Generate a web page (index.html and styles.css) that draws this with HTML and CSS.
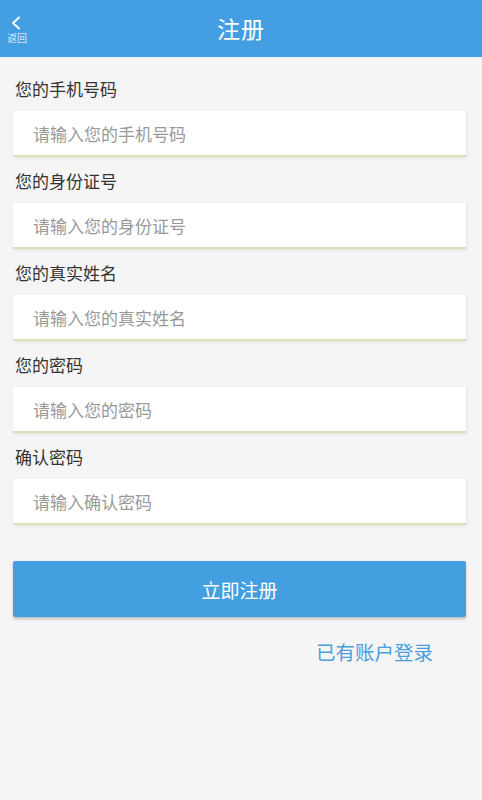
FILE: index.html
```html
<!DOCTYPE html>
<html lang="zh-CN">
<head>
<meta charset="utf-8">
<title>注册</title>
<link rel="stylesheet" href="styles.css">
</head>
<body>
<header class="topbar">
  <a class="back" href="#">
    <svg class="back-icon" width="12" height="14" viewBox="0 0 12 14"><path d="M9 1.5 L3 7 L9 12.5" fill="none" stroke="#fff" stroke-width="2" stroke-linecap="round" stroke-linejoin="round"/></svg>
    <span class="back-text">返回</span>
  </a>
  <h1 class="title">注册</h1>
</header>
<main class="form">
  <div class="field">
    <label class="label">您的手机号码</label>
    <input class="input" type="text" placeholder="请输入您的手机号码">
  </div>
  <div class="field">
    <label class="label">您的身份证号</label>
    <input class="input" type="text" placeholder="请输入您的身份证号">
  </div>
  <div class="field">
    <label class="label">您的真实姓名</label>
    <input class="input" type="text" placeholder="请输入您的真实姓名">
  </div>
  <div class="field">
    <label class="label">您的密码</label>
    <input class="input" type="password" placeholder="请输入您的密码">
  </div>
  <div class="field">
    <label class="label">确认密码</label>
    <input class="input" type="password" placeholder="请输入确认密码">
  </div>
  <button class="submit" type="button">立即注册</button>
  <div class="login-row"><a class="login" href="#">已有账户登录</a></div>
</main>
</body>
</html>
```
FILE: styles.css
```css
* { box-sizing: border-box; }
html, body { margin: 0; padding: 0; }
body {
  background: #f5f5f5;
  font-family: "Noto Sans CJK SC", "Noto Sans", sans-serif;
  color: #333;
  width: 482px;
  min-height: 800px;
}
.topbar {
  position: relative;
  height: 57px;
  background: #439fe1;
  display: flex;
  align-items: center;
  justify-content: center;
}
.title {
  margin: 0;
  font-size: 23px;
  font-weight: normal;
  color: #fff;
  line-height: 1;
  letter-spacing: 1px;
}
.back {
  position: absolute;
  left: 6px;
  top: 16px;
  display: flex;
  flex-direction: column;
  align-items: center;
  text-decoration: none;
  width: 22px;
}
.back-icon { display: block; margin-left: -2px; }
.back-text {
  font-size: 10px;
  line-height: 12px;
  color: #d6e9f8;
  margin-top: 2px;
  white-space: nowrap;
}
.form {
  padding: 8px 16px 0 13px;
  display: flex;
  flex-direction: column;
}
.field {
  padding-top: 13px;
  display: flex;
  flex-direction: column;
}
.label {
  font-size: 17px;
  line-height: 22px;
  color: #333;
  padding-left: 2px;
  margin-bottom: 11px;
}
.input {
  height: 46px;
  width: 453px;
  border: none;
  border-bottom: 2px solid #d6e2b4;
  background: #fff;
  padding: 0 20px;
  font-size: 17px;
  font-family: inherit;
  color: #333;
  outline: none;
  box-shadow: 1px 1px 3px rgba(0,0,0,0.08);
}
.input::placeholder { color: #999; }
.submit {
  margin-top: 36px;
  width: 453px;
  height: 56px;
  background: #449fe0;
  border: none;
  border-radius: 2px;
  color: #fff;
  font-size: 19px;
  font-family: inherit;
  box-shadow: 0 2px 3px rgba(0,0,0,0.22);
}
.login-row {
  margin-top: 23px;
  display: flex;
  justify-content: flex-end;
  padding-right: 33px;
}
.login {
  font-size: 19.5px;
  line-height: 24px;
  color: #4a9edb;
  text-decoration: none;
}
```
